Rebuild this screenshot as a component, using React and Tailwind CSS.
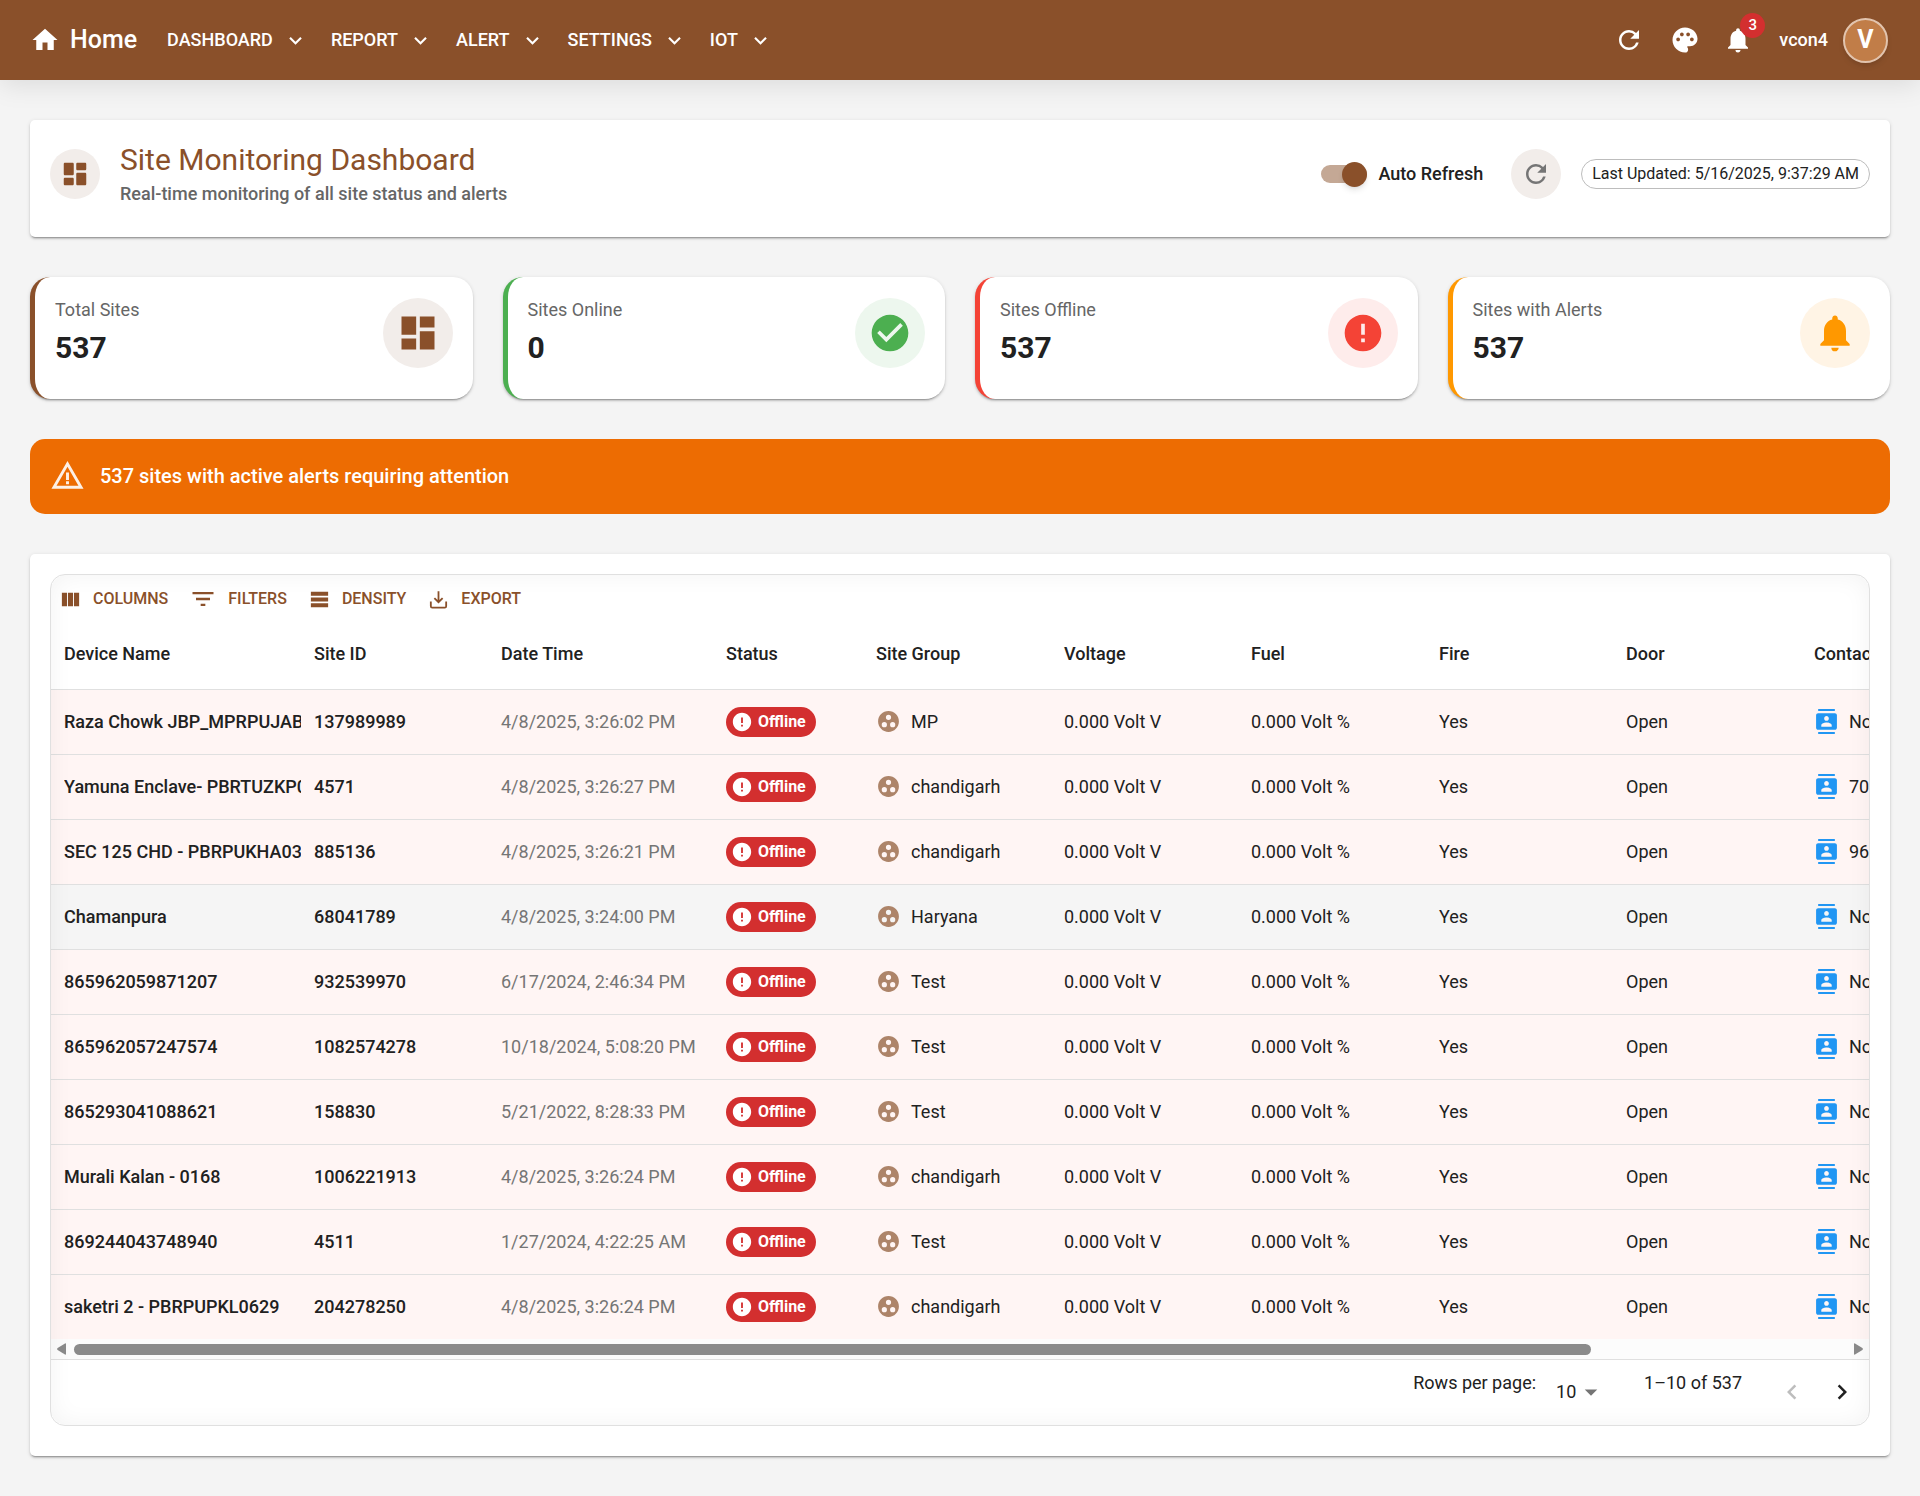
import { MdHome, MdRefresh, MdPalette, MdNotifications, MdCheckCircle, MdError, MdWarningAmber, MdGroupWork, MdContacts, MdKeyboardArrowDown, MdDashboard, MdArrowDropDown, MdChevronLeft, MdChevronRight, MdFilterList } from "react-icons/md";

const NAV = ["DASHBOARD", "REPORT", "ALERT", "SETTINGS", "IOT"];

const STATS = [
  { label: "Total Sites", value: "537", border: "border-[#8a502a]", bubble: "bg-[#f2edea]", color: "text-[#8a502a]", Icon: MdDashboard },
  { label: "Sites Online", value: "0", border: "border-[#4caf50]", bubble: "bg-[#edf7ee]", color: "text-[#4caf50]", Icon: MdCheckCircle },
  { label: "Sites Offline", value: "537", border: "border-[#f44336]", bubble: "bg-[#feeceb]", color: "text-[#f44336]", Icon: MdError },
  { label: "Sites with Alerts", value: "537", border: "border-[#ff9800]", bubble: "bg-[#fff4e5]", color: "text-[#ff9800]", Icon: MdNotifications },
];

const ROWS = [
  ["Raza Chowk JBP_MPRPUJABC", "137989989", "4/8/2025, 3:26:02 PM", "MP", "No"],
  ["Yamuna Enclave- PBRTUZKP01", "4571", "4/8/2025, 3:26:27 PM", "chandigarh", "70"],
  ["SEC 125 CHD - PBRPUKHA031", "885136", "4/8/2025, 3:26:21 PM", "chandigarh", "96"],
  ["Chamanpura", "68041789", "4/8/2025, 3:24:00 PM", "Haryana", "No"],
  ["865962059871207", "932539970", "6/17/2024, 2:46:34 PM", "Test", "No"],
  ["865962057247574", "1082574278", "10/18/2024, 5:08:20 PM", "Test", "No"],
  ["865293041088621", "158830", "5/21/2022, 8:28:33 PM", "Test", "No"],
  ["Murali Kalan - 0168", "1006221913", "4/8/2025, 3:26:24 PM", "chandigarh", "No"],
  ["869244043748940", "4511", "1/27/2024, 4:22:25 AM", "Test", "No"],
  ["saketri 2 - PBRPUPKL0629", "204278250", "4/8/2025, 3:26:24 PM", "chandigarh", "No"],
];

const COLUMNS = [
  ["Device Name", "w-[250px]"],
  ["Site ID", "w-[187px]"],
  ["Date Time", "w-[225px]"],
  ["Status", "w-[150px]"],
  ["Site Group", "w-[188px]"],
  ["Voltage", "w-[187px]"],
  ["Fuel", "w-[188px]"],
  ["Fire", "w-[187px]"],
  ["Door", "w-[188px]"],
  ["Contact", "w-[250px]"],
];

const CARD_SHADOW = "shadow-[0_3px_1px_-2px_rgba(0,0,0,0.2),0_2px_2px_0_rgba(0,0,0,0.14),0_1px_4px_0_rgba(0,0,0,0.12)]";

function ColumnsIcon() {
  return (
    <svg viewBox="0 0 24 24" className="size-[23px]" fill="currentColor" aria-hidden="true">
      <path d="M14.67 5v14H9.33V5h5.34zM15.67 19H21V5h-5.33v14zM8.33 19V5H3v14h5.33z" />
    </svg>
  );
}

function DensityIcon() {
  return (
    <svg viewBox="0 0 24 24" className="size-[23px]" fill="currentColor" aria-hidden="true">
      <path d="M21 8H3V4h18v4zm0 2H3v4h18v-4zm0 6H3v4h18v-4z" />
    </svg>
  );
}

function ExportIcon() {
  return (
    <svg viewBox="0 0 24 24" className="size-[23px]" fill="none" stroke="currentColor" strokeWidth="1.9" aria-hidden="true">
      <path d="M4 14v5q0 1.500 1.500 1.500h13q1.500 0 1.500-1.500v-5M12 3.500v11M7.700 10.500l4.300 4.300 4.300-4.300" />
    </svg>
  );
}

function DashboardRounded() {
  return (
    <svg viewBox="0 0 24 24" className="size-[30px]" fill="currentColor" aria-hidden="true">
      <path d="M4 13h6c.55 0 1-.45 1-1V4c0-.55-.45-1-1-1H4c-.55 0-1 .45-1 1v8c0 .55.45 1 1 1zm0 8h6c.55 0 1-.45 1-1v-4c0-.55-.45-1-1-1H4c-.55 0-1 .45-1 1v4c0 .55.45 1 1 1zm10 0h6c.55 0 1-.45 1-1v-8c0-.55-.45-1-1-1h-6c-.55 0-1 .45-1 1v8c0 .55.45 1 1 1zM13 4v4c0 .55.45 1 1 1h6c.55 0 1-.45 1-1V4c0-.55-.45-1-1-1h-6c-.55 0-1 .45-1 1z" />
    </svg>
  );
}

function Header() {
  return (
    <header className="relative flex h-20 items-center bg-[#8a502a] px-8 text-white shadow-[0_5px_25px_rgba(0,0,0,0.1)]">
      <a href="#home" className="flex items-center gap-[10px] text-[25px] font-medium">
        <MdHome className="-ml-0.5 size-[30px]" />
        Home
      </a>
      <nav className="ml-[30px] flex items-center gap-[23px]">
        {NAV.map((item) => (
          <button key={item} type="button" className="flex items-center gap-[10px] text-lg font-medium">
            {item}
            <MdKeyboardArrowDown className="size-[25px]" />
          </button>
        ))}
      </nav>
      <div className="ml-auto flex items-center">
        <button type="button" aria-label="Refresh" className="mr-[26px]"><MdRefresh className="size-[30px]" /></button>
        <button type="button" aria-label="Theme" className="mr-[23px]"><MdPalette className="size-[30px]" /></button>
        <button type="button" aria-label="Notifications" className="relative mr-[26px]">
          <MdNotifications className="size-[30px]" />
          <span className="absolute -top-3 -right-3 grid size-[25px] place-items-center rounded-full bg-[#d32f2f] text-[15px] font-medium">3</span>
        </button>
        <span className="mr-[15px] text-lg font-medium">vcon4</span>
        <button type="button" className="grid size-[45px] place-items-center rounded-full border-2 border-[#e2c4ae] bg-[#c17d48] text-[25px] font-bold shadow-md">V</button>
      </div>
    </header>
  );
}

function TitleCard() {
  return (
    <section className={`flex h-[117px] items-start justify-between rounded-[5px] bg-white px-5 pt-5 ${CARD_SHADOW}`}>
      <div className="flex items-center gap-5">
        <span className="grid size-[50px] place-items-center rounded-full bg-[#f2edea] text-[#8a502a]"><DashboardRounded /></span>
        <div>
          <h1 className="text-[30px] leading-10 text-[#8a502a]">Site Monitoring Dashboard</h1>
          <p className="text-lg leading-7 font-medium text-[#666666]">Real-time monitoring of all site status and alerts</p>
        </div>
      </div>
      <div className="mt-[9px] flex items-center">
        <label className="flex items-center gap-[11px] text-lg font-medium text-[#212121]">
          <input type="checkbox" role="switch" defaultChecked className="peer sr-only" />
          <span className="flex h-[18px] w-[46px] items-center justify-end rounded-full bg-[#c4a895]">
            <span className="size-[25px] shrink-0 rounded-full bg-[#8a502a] shadow-md" />
          </span>
          Auto Refresh
        </label>
        <button type="button" aria-label="Refresh now" className="ml-7 grid size-[50px] place-items-center rounded-full bg-[#f2edea] text-[#757575]"><MdRefresh className="size-[30px]" /></button>
        <span className="ml-5 flex h-[30px] items-center rounded-full border border-[#bdbdbd] px-[10px] text-base text-[#212121]">Last Updated: 5/16/2025, 9:37:29 AM</span>
      </div>
    </section>
  );
}

function StatCard({ label, value, border, bubble, color, Icon }) {
  return (
    <article className={`flex h-[122px] items-start justify-between rounded-[20px] border-l-[5px] bg-white px-5 pt-[21px] ${border} ${CARD_SHADOW}`}>
      <div>
        <p className="text-lg leading-6 text-[#666666]">{label}</p>
        <p className="mt-[3px] text-[30px] leading-[46px] font-bold text-[#212121]">{value}</p>
      </div>
      <span className={`grid size-[70px] place-items-center rounded-full ${bubble} ${color}`}><Icon className="size-[44px]" /></span>
    </article>
  );
}

function Toolbar() {
  const tools = [["COLUMNS", ColumnsIcon], ["FILTERS", MdFilterList], ["DENSITY", DensityIcon], ["EXPORT", ExportIcon]];
  return (
    <div className="flex h-[50px] items-center gap-[21px] px-2 pb-0.5">
      {tools.map(([name, Icon]) => (
        <button key={name} type="button" className="flex items-center gap-[11px] text-base font-medium text-[#8a502a] [&>svg]:shrink-0">
          <Icon className="size-[28px]" />
          {name}
        </button>
      ))}
    </div>
  );
}

function SiteTable() {
  return (
    <div className="overflow-hidden">
      <table className="w-[2000px] table-fixed border-collapse text-lg text-[#212121]">
        <thead>
          <tr className="h-16 border-b border-[#e0e0e0]">
            {COLUMNS.map(([name, width]) => (
              <th key={name} scope="col" className={`px-[13px] pb-[5px] text-left font-medium ${width}`}>{name}</th>
            ))}
          </tr>
        </thead>
        <tbody>
          {ROWS.map(([device, id, time, group, contact]) => (
            <tr key={device} className={`h-[65px] border-b border-[#e0e0e0] whitespace-nowrap last:border-b-0 ${device === "Chamanpura" ? "bg-[#f5f5f5]" : "bg-[#fff5f4]"}`}>
              <td className="pl-[13px] font-medium"><div className="overflow-hidden">{device}</div></td>
              <td className="px-[13px] font-medium">{id}</td>
              <td className="px-[13px] text-[#757575]">{time}</td>
              <td className="px-[13px]">
                <span className="inline-flex h-[30px] items-center gap-[5px] rounded-full bg-[#d32f2f] pr-[10px] pl-[5px] align-middle text-base font-bold text-white">
                  <MdError className="size-[22px]" />
                  Offline
                </span>
              </td>
              <td className="px-[13px]"><span className="flex items-center gap-[10px]"><MdGroupWork className="size-[25px] text-[#ad8469]" />{group}</span></td>
              <td className="px-[13px]">0.000 Volt V</td>
              <td className="px-[13px]">0.000 Volt %</td>
              <td className="px-[13px]">Yes</td>
              <td className="px-[13px]">Open</td>
              <td className="px-[13px]"><span className="flex items-center gap-[10px]"><MdContacts className="size-[25px] text-[#2196f3]" />{contact}</span></td>
            </tr>
          ))}
        </tbody>
      </table>
    </div>
  );
}

function ScrollTrack() {
  return (
    <div className="flex h-[21px] items-center gap-2 border-b border-[#e0e0e0] bg-[#fcfcfc] px-[6px] text-[#8b8b8b]">
      <svg viewBox="0 0 9 12" className="h-3 w-[9px]" fill="currentColor" aria-hidden="true"><path d="M9 1v10q0 1-1 .6L.6 7Q-.3 6 .6 5L8 .4Q9 0 9 1z" /></svg>
      <div className="flex-1"><div className="h-[11px] w-[85.6%] rounded-full bg-[#8b8b8b]" /></div>
      <svg viewBox="0 0 9 12" className="h-3 w-[9px]" fill="currentColor" aria-hidden="true"><path d="M0 1v10q0 1 1 .6L8.400 7Q9.300 6 8.400 5L1 .4Q0 0 0 1z" /></svg>
    </div>
  );
}

function Pagination() {
  return (
    <div className="flex h-[65px] items-center justify-end pr-3 pb-0.5 text-lg text-[#212121]">
      <label htmlFor="page-size" className="mb-[18px]">Rows per page:</label>
      <span className="relative ml-5 flex items-center">
        <select id="page-size" defaultValue="10" className="w-[46px] appearance-none bg-transparent">
          <option>10</option><option>25</option><option>50</option>
        </select>
        <MdArrowDropDown className="pointer-events-none absolute -right-1 size-[30px] text-[#757575]" />
      </span>
      <span className="mb-[18px] ml-[42px]">1–10 of 537</span>
      <button type="button" aria-label="Previous page" disabled className="ml-[35px] text-[#bdbdbd]"><MdChevronLeft className="size-[30px]" /></button>
      <button type="button" aria-label="Next page" className="ml-5"><MdChevronRight className="size-[30px]" /></button>
    </div>
  );
}

export default function App() {
  return (
    <div className="min-h-screen bg-[#f4f4f4] font-['Roboto',sans-serif]">
      <Header />
      <main className="flex flex-col gap-10 px-[30px] py-10">
        <TitleCard />
        <section className="grid grid-cols-4 gap-[30px]">
          {STATS.map((stat) => <StatCard key={stat.label} {...stat} />)}
        </section>
        <div role="alert" className="flex h-[75px] items-center gap-[15px] rounded-[15px] bg-[#ed6c02] px-5 pb-0.5 text-xl font-medium text-white">
          <MdWarningAmber className="size-[35px] opacity-90" />
          537 sites with active alerts requiring attention
        </div>
        <section className={`rounded-[5px] bg-white px-5 pt-5 pb-[30px] ${CARD_SHADOW}`}>
          <div className="relative overflow-hidden rounded-[15px] border border-[#e0e0e0]">
            <Toolbar />
            <SiteTable />
            <ScrollTrack />
            <Pagination />
            <div className="pointer-events-none absolute inset-0 rounded-[15px] shadow-[inset_0_0_25px_rgba(0,0,0,0.05)]" />
          </div>
        </section>
      </main>
    </div>
  );
}
